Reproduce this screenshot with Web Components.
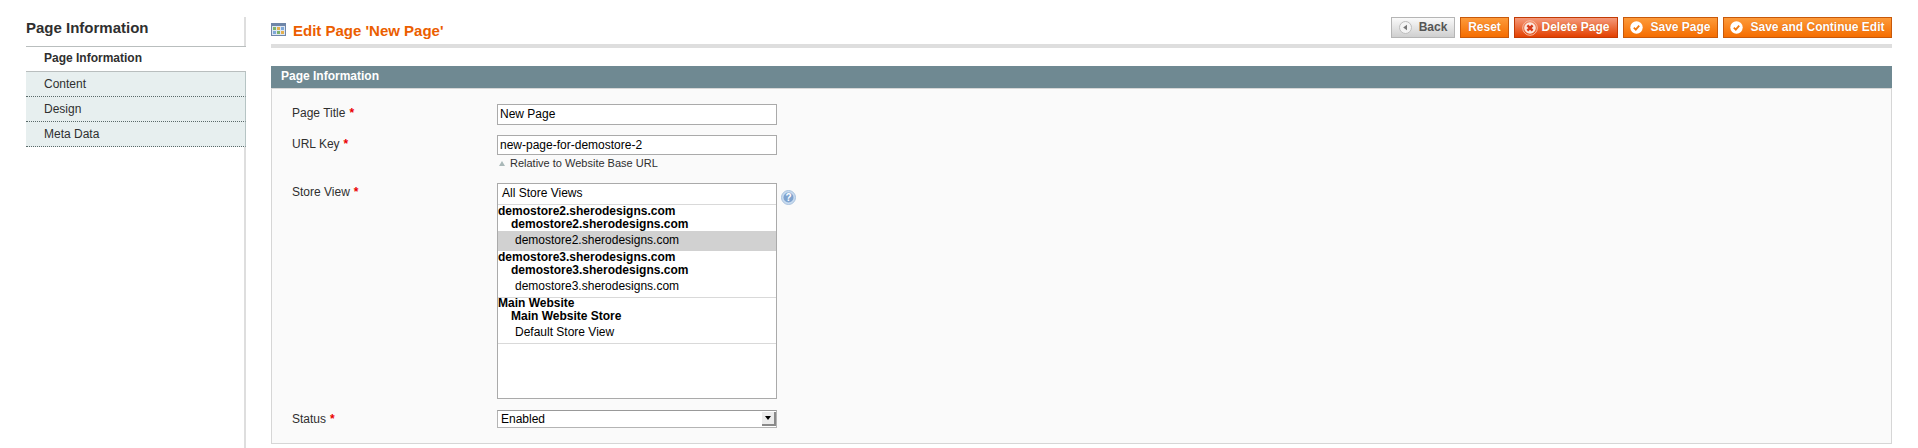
<!DOCTYPE html>
<html>
<head>
<meta charset="utf-8">
<title>Edit Page</title>
<style>
html,body{margin:0;padding:0;background:#fff;height:448px;overflow:hidden;}
body{font:12px/15px "Liberation Sans",Arial,sans-serif;color:#2f2f2f;}
</style>
</head>
<body>
<page-layout>
  <side-tabs slot="side" heading="Page Information">
    <side-tab active>Page Information</side-tab>
    <side-tab>Content</side-tab>
    <side-tab>Design</side-tab>
    <side-tab>Meta Data</side-tab>
  </side-tabs>
  <page-header heading="Edit Page 'New Page'">
    <action-btn kind="back" icon="back" style="width:64px">Back</action-btn>
    <action-btn style="width:49px">Reset</action-btn>
    <action-btn kind="delete" icon="delete" style="width:104px">Delete Page</action-btn>
    <action-btn icon="save" style="width:95px">Save Page</action-btn>
    <action-btn icon="save" style="width:169px">Save and Continue Edit</action-btn>
  </page-header>
  <form-panel heading="Page Information">
    <form-row label="Page Title" style="--row-h:21px;--row-mb:10px"><text-box>New Page</text-box></form-row>
    <form-row label="URL Key" style="--row-h:20px;--row-mb:13px">
      <text-box>new-page-for-demostore-2</text-box>
      <span slot="note">Relative to Website Base URL</span>
    </form-row>
    <form-row label="Store View" style="--row-h:216px;--row-mb:11px">
      <store-list>
        <store-option>All Store Views</store-option>
        <store-option sep kind="site">demostore2.sherodesigns.com</store-option>
        <store-option kind="group">demostore2.sherodesigns.com</store-option>
        <store-option kind="view" selected>demostore2.sherodesigns.com</store-option>
        <store-option kind="site">demostore3.sherodesigns.com</store-option>
        <store-option kind="group">demostore3.sherodesigns.com</store-option>
        <store-option kind="view">demostore3.sherodesigns.com</store-option>
        <store-option sep kind="site" style="--h:13px;--lh:11px">Main Website</store-option>
        <store-option kind="group">Main Website Store</store-option>
        <store-option kind="view">Default Store View</store-option>
        <store-option sep kind="blank"></store-option>
      </store-list>
      <help-icon slot="after"></help-icon>
    </form-row>
    <form-row label="Status" style="--row-h:18px;--row-mb:0"><select-box>Enabled</select-box></form-row>
  </form-panel>
</page-layout>

<script>
const icons = {
  back: `<svg width="13" height="13" viewBox="0 0 13 13"><circle cx="6.5" cy="6.5" r="6" fill="#f4f4f4" stroke="#bdbdbd"/><path d="M8 3.8v5.4L4.2 6.5z" fill="#777"/></svg>`,
  delete: `<svg width="16" height="16" viewBox="0 0 16 16"><circle cx="8" cy="8" r="7.3" fill="none" stroke="#f6b8a0"/><circle cx="8" cy="8" r="5.8" fill="#fbe6dc"/><path d="M5.4 5.4l5.2 5.2M10.6 5.4l-5.2 5.2" stroke="#d5391a" stroke-width="2.4"/></svg>`,
  save: `<svg width="13" height="13" viewBox="0 0 13 13"><circle cx="6.5" cy="6.5" r="6.2" fill="#fff"/><path d="M3.8 6.6l2 2 3.4-4" fill="none" stroke="#f07a10" stroke-width="1.8"/></svg>`
};

class PageLayout extends HTMLElement{
  constructor(){
    super();
    this.attachShadow({mode:"open"}).innerHTML = `
    <style>
      :host{display:flex;height:448px;padding:0 26px;box-sizing:border-box;}
      .side{flex:0 0 220px;display:flex;}
      .main{flex:1;margin-left:25px;min-width:0;}
    </style>
    <div class="side"><slot name="side"></slot></div>
    <div class="main"><slot></slot></div>`;
  }
}
customElements.define("page-layout",PageLayout);

class SideTabs extends HTMLElement{
  constructor(){
    super();
    this.attachShadow({mode:"open"}).innerHTML = `
    <style>
      :host{display:block;flex:1;margin-top:17px;border-right:2px solid #dedede;}
      h3{margin:0 -2px 0 0;height:30px;box-sizing:border-box;padding-top:2px;border-bottom:1px solid #b9bebe;font-size:15px;line-height:18px;color:#2f2f2f;}
      .list{margin-right:-2px;}
    </style>
    <h3>${this.getAttribute("heading")}</h3>
    <div class="list"><slot></slot></div>`;
  }
}
customElements.define("side-tabs",SideTabs);

class SideTab extends HTMLElement{
  constructor(){
    super();
    this.attachShadow({mode:"open"}).innerHTML = `
    <style>
      :host{display:block;height:25px;box-sizing:border-box;padding:5px 0 0 18px;background:#e7efef;border-bottom:1px dotted #5a6a6a;border-right:1px solid #b6c4c4;color:#2f2f2f;line-height:15px;}
      :host([active]){background:#fff;font-weight:bold;border-bottom:1px solid #b9bebe;border-right:0;padding-top:4px;}
    </style>
    <slot></slot>`;
  }
}
customElements.define("side-tab",SideTab);

class PageHeader extends HTMLElement{
  constructor(){
    super();
    this.attachShadow({mode:"open"}).innerHTML = `
    <style>
      :host{display:flex;align-items:flex-start;height:27px;padding-top:17px;border-bottom:4px solid #dedede;margin-bottom:18px;}
      .title{display:flex;align-items:flex-start;gap:7px;margin-top:5px;flex:1;}
      .title svg{margin-top:1px;}
      h3{margin:0;font-size:15px;line-height:18px;color:#eb5e00;}
      .btns{display:flex;gap:5px;}
    </style>
    <div class="title">
      <svg width="15" height="13" viewBox="0 0 15 13">
        <rect x=".5" y=".5" width="14" height="12" fill="#dfe7f2" stroke="#6f86a8"/>
        <rect x="1" y="1" width="13" height="2" fill="#6f86a8"/>
        <rect x="2" y="4" width="3" height="3" fill="#7fb26a"/><rect x="6" y="4" width="3" height="3" fill="#e3b050"/><rect x="10" y="4" width="3" height="3" fill="#7fa8d8"/>
        <rect x="2" y="8" width="3" height="3" fill="#7fa8d8"/><rect x="6" y="8" width="3" height="3" fill="#7fb26a"/><rect x="10" y="8" width="3" height="3" fill="#e3b050"/>
      </svg>
      <h3>${this.getAttribute("heading")}</h3>
    </div>
    <div class="btns"><slot></slot></div>`;
  }
}
customElements.define("page-header",PageHeader);

class ActionBtn extends HTMLElement{
  constructor(){
    super();
    const icon = icons[this.getAttribute("icon")] || "";
    this.attachShadow({mode:"open"}).innerHTML = `
    <style>
      :host{display:flex;align-items:center;justify-content:center;gap:7px;height:21px;box-sizing:border-box;border:1px solid #c8590a;background:linear-gradient(#fd9a3a,#f56d00);color:#fff;font-weight:bold;font-size:12px;line-height:15px;text-shadow:0 0 1px #c8590a;white-space:nowrap;}
      :host([kind=back]){border-color:#b5b5b5;background:linear-gradient(#fafafa,#cfcfcf);color:#555;text-shadow:none;}
      :host([kind=delete]){border-color:#c23a05;background:linear-gradient(#f4997a,#e34000);gap:3px;}
      svg{display:block;flex:none;}
    </style>
    ${icon}<slot></slot>`;
  }
}
customElements.define("action-btn",ActionBtn);

class FormPanel extends HTMLElement{
  constructor(){
    super();
    this.attachShadow({mode:"open"}).innerHTML = `
    <style>
      :host{display:block;}
      h4{margin:0;height:22px;box-sizing:border-box;padding:3px 10px 0;background:#6f8992;color:#fff;font-size:12px;line-height:15px;}
      .body{height:356px;box-sizing:border-box;padding:15px 20px 0;background:#fafafa;border:1px solid #d6d6d6;}
    </style>
    <h4>${this.getAttribute("heading")}</h4>
    <div class="body"><slot></slot></div>`;
  }
}
customElements.define("form-panel",FormPanel);

class FormRow extends HTMLElement{
  constructor(){
    super();
    const label = this.getAttribute("label");
    this.attachShadow({mode:"open"}).innerHTML = `
    <style>
      :host{display:grid;grid-template-columns:205px 280px auto;margin-bottom:var(--row-mb,10px);}
      label{display:flex;align-items:flex-start;padding-top:2px;color:#2f2f2f;}
      label b{color:#eb0000;margin-left:4px;font-size:12px;}
      .ctl{height:var(--row-h,22px);display:flex;}
      .after{padding:7px 0 0 4px;}
      .note{grid-column:2;font-size:11px;line-height:13px;color:#2f2f2f;margin-top:2px;display:none;align-items:center;gap:5px;padding-left:2px;}
      .note.on{display:flex;}
      .note i{width:0;height:0;border:3.5px solid transparent;border-top:0;border-bottom:5px solid #a9b8b8;}
    </style>
    <label>${label}<b>*</b></label>
    <div class="ctl"><slot></slot></div>
    <div class="after"><slot name="after"></slot></div>
    <div class="note"><i></i><slot name="note"></slot></div>`;
  }
  connectedCallback(){
    if(this.querySelector("[slot=note]")) this.shadowRoot.querySelector(".note").classList.add("on");
  }
}
customElements.define("form-row",FormRow);

class TextBox extends HTMLElement{
  constructor(){
    super();
    this.attachShadow({mode:"open"}).innerHTML = `
    <style>
      :host{display:flex;align-items:center;flex:1;box-sizing:border-box;padding:0 2px;border:1px solid #aaa;background:#fff;color:#000;font-size:12px;}
    </style>
    <slot></slot>`;
  }
}
customElements.define("text-box",TextBox);

class SelectBox extends HTMLElement{
  constructor(){
    super();
    this.attachShadow({mode:"open"}).innerHTML = `
    <style>
      :host{display:flex;align-items:center;flex:1;box-sizing:border-box;padding:0 0 0 3px;border:1px solid #b4b4b4;border-top-color:#999;background:#fff;color:#000;font-size:12px;}
      .t{flex:1;}
      .arrow{width:14px;height:14px;box-sizing:border-box;background:#ececec;border-right:2px solid #8a8a8a;border-bottom:2px solid #8a8a8a;display:flex;align-items:center;justify-content:center;}
      .arrow i{width:0;height:0;border:3.5px solid transparent;border-bottom:0;border-top:4px solid #000;}
    </style>
    <span class="t"><slot></slot></span><span class="arrow"><i></i></span>`;
  }
}
customElements.define("select-box",SelectBox);

class StoreList extends HTMLElement{
  constructor(){
    super();
    this.attachShadow({mode:"open"}).innerHTML = `
    <style>
      :host{display:block;flex:1;box-sizing:border-box;border:1px solid #aaa;background:#fff;color:#000;overflow:hidden;}
    </style>
    <slot></slot>`;
  }
}
customElements.define("store-list",StoreList);

class StoreOption extends HTMLElement{
  constructor(){
    super();
    this.attachShadow({mode:"open"}).innerHTML = `
    <style>
      :host{display:block;font-size:12px;line-height:15px;height:20px;box-sizing:border-box;padding:2px 0 0 4px;white-space:nowrap;}
      :host([kind=site]){height:13px;padding:0;font-weight:bold;line-height:13px;}
      :host([kind=group]){height:13px;padding:0 0 0 13px;font-weight:bold;line-height:13px;}
      :host([kind=view]){padding-left:17px;}
      :host([selected]){background:#d1d1d1;}
      :host([sep]){border-top:1px solid #d9d9d9;}
      :host([kind=site][sep]){height:var(--h,14px);line-height:var(--lh,13px);}
      :host([kind=blank]){height:20px;}
    </style>
    <slot></slot>`;
  }
}
customElements.define("store-option",StoreOption);

class HelpIcon extends HTMLElement{
  constructor(){
    super();
    this.attachShadow({mode:"open"}).innerHTML = `
    <style>
      :host{display:block;width:15px;height:15px;}
      svg{display:block;}
      text{font:bold 10px "Liberation Sans",sans-serif;fill:#fff;}
    </style>
    <svg width="15" height="15" viewBox="0 0 15 15"><circle cx="7.5" cy="7.5" r="7" fill="#c9dcf0" stroke="#a9c2de"/><circle cx="7.5" cy="7.5" r="5" fill="#7fa3cf"/><text x="7.5" y="11" text-anchor="middle">?</text></svg>`;
  }
}
customElements.define("help-icon",HelpIcon);
</script>
</body>
</html>
